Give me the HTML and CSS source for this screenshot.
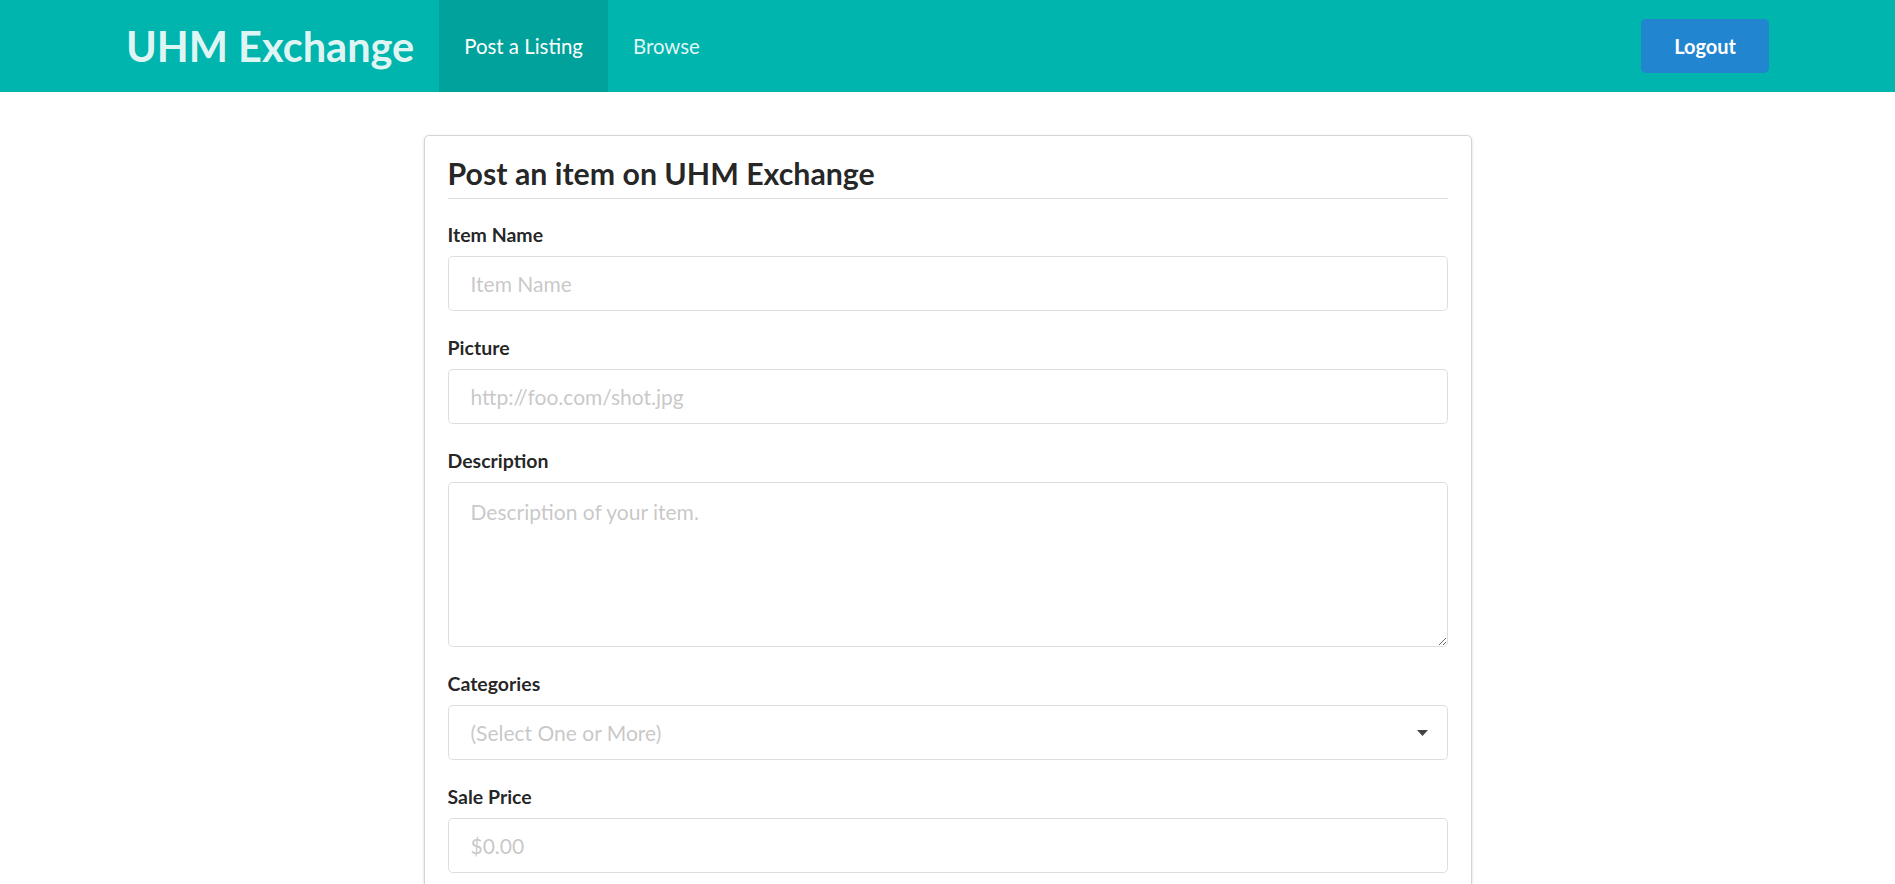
FILE: index.html
```html
<!DOCTYPE html>
<html lang="en">
<head>
<meta charset="utf-8">
<title>UHM Exchange - Post a Listing</title>
<link rel="stylesheet" href="styles.css">
</head>
<body>
<nav class="topbar">
  <a class="item brand" href="#">UHM Exchange</a>
  <a class="item active" href="#">Post a Listing</a>
  <a class="item" href="#">Browse</a>
  <div class="right">
    <button class="logout" type="button">Logout</button>
  </div>
</nav>

<main class="page">
  <section class="card">
    <h2 class="card-title">Post an item on UHM Exchange</h2>
    <form class="form">
      <div class="field">
        <label class="label" for="name">Item Name</label>
        <input class="input" id="name" type="text" placeholder="Item Name">
      </div>
      <div class="field">
        <label class="label" for="pic">Picture</label>
        <input class="input" id="pic" type="text" placeholder="http://foo.com/shot.jpg">
      </div>
      <div class="field">
        <label class="label" for="desc">Description</label>
        <textarea class="input textarea" id="desc" placeholder="Description of your item."></textarea>
      </div>
      <div class="field">
        <label class="label">Categories</label>
        <div class="input dropdown">
          <span class="placeholder">(Select One or More)</span>
          <svg class="caret" width="11" height="6" viewBox="0 0 11 6"><path d="M0 0h11L5.5 6z" fill="#444"/></svg>
        </div>
      </div>
      <div class="field">
        <label class="label" for="price">Sale Price</label>
        <input class="input" id="price" type="text" placeholder="$0.00">
      </div>
    </form>
  </section>
</main>
</body>
</html>
```

FILE: styles.css
```css
* { box-sizing: border-box; }

html, body {
  margin: 0;
  padding: 0;
  background: #ffffff;
  font-family: Lato, "Open Sans", "Liberation Sans", sans-serif;
  color: rgba(0, 0, 0, 0.87);
}

.topbar {
  display: flex;
  align-items: stretch;
  height: 92px;
  padding: 0 126px 0 101px;
  background: #00b5ad;
}

.item {
  display: flex;
  align-items: center;
  padding: 0 25px;
  color: rgba(255, 255, 255, 0.9);
  text-decoration: none;
  font-size: 20.4px;
  font-weight: 400;
}

.brand {
  font-size: 41.5px;
  font-weight: 700;
  letter-spacing: 0;
}

.item.active {
  background: rgba(0, 0, 0, 0.1);
  color: #ffffff;
}

.right {
  margin-left: auto;
  display: flex;
  align-items: center;
}

.logout {
  height: 54px;
  padding: 0 33px;
  border: none;
  border-radius: 5px;
  background: #2185d0;
  color: #ffffff;
  font-family: Lato, "Open Sans", "Liberation Sans", sans-serif;
  font-size: 20px;
  font-weight: 700;
  cursor: pointer;
}

.page {
  padding-top: 43px;
}

.card {
  width: 1048px;
  margin: 0 auto;
  padding: 19px 23px 24px;
  border: 1px solid #d4d4d5;
  border-radius: 5px;
  box-shadow: 0 1px 3px 0 rgba(34, 36, 38, 0.18);
  background: #ffffff;
}

.card-title {
  margin: 0;
  padding-bottom: 7px;
  border-bottom: 1px solid rgba(34, 36, 38, 0.15);
  font-size: 30.3px;
  line-height: 36px;
  font-weight: 700;
  color: rgba(0, 0, 0, 0.87);
}

.form {
  display: flex;
  flex-direction: column;
  gap: 25px;
  padding-top: 24px;
}

.field {
  display: flex;
  flex-direction: column;
}

.label {
  margin-bottom: 9px;
  font-size: 19.5px;
  line-height: 24px;
  font-weight: 700;
  color: rgba(0, 0, 0, 0.87);
}

.input {
  display: block;
  width: 100%;
  height: 55px;
  margin: 0;
  padding: 0 22px;
  border: 1px solid rgba(34, 36, 38, 0.15);
  border-radius: 5px;
  background: #ffffff;
  font-family: Lato, "Open Sans", "Liberation Sans", sans-serif;
  font-size: 21px;
  color: rgba(0, 0, 0, 0.87);
  outline: none;
}

.input::placeholder {
  color: rgba(191, 191, 191, 0.87);
}

.textarea {
  height: 165px;
  padding: 15px 22px;
  line-height: 27px;
  resize: vertical;
}

.dropdown {
  display: flex;
  align-items: center;
  justify-content: space-between;
  padding-right: 19px;
}

.placeholder {
  color: rgba(191, 191, 191, 0.87);
}

.caret {
  display: block;
}
```
